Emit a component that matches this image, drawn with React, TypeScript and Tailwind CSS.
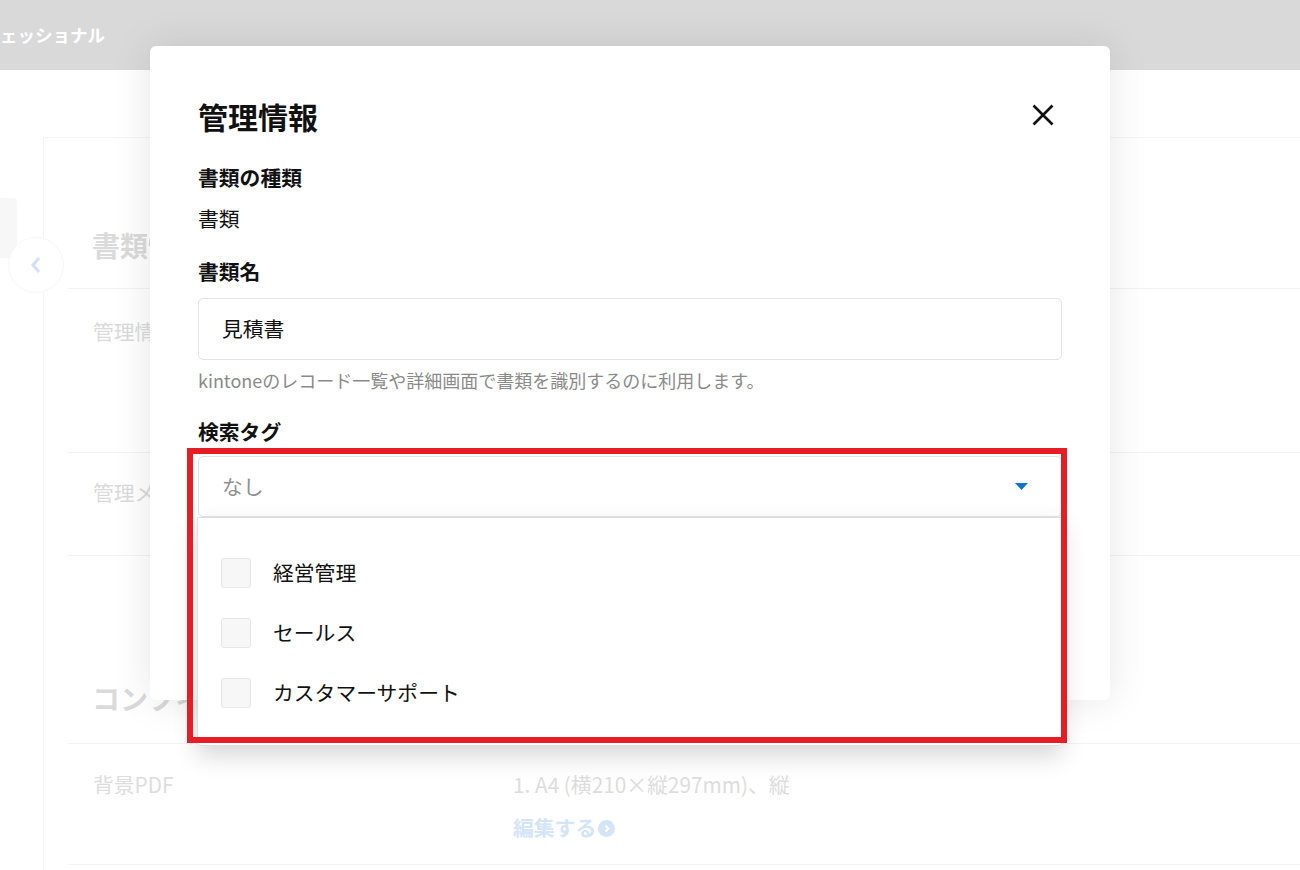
import { useState } from 'react';

const tags = ['経営管理', 'セールス', 'カスタマーサポート'];

function CloseIcon() {
  return (
    <svg width="22" height="22" viewBox="0 0 22 22" className="mr-[8px] mb-[3px]">
      <path d="M1.5 1.5 L20.5 20.5 M20.5 1.5 L1.5 20.5" stroke="#111" strokeWidth="2.6" fill="none" />
    </svg>
  );
}

function Caret() {
  return (
    <svg width="13" height="7" viewBox="0 0 13 7">
      <polygon points="0,0 13,0 6.5,7" fill="#0b76d1" />
    </svg>
  );
}

function BackgroundPage() {
  return (
    <div className="w-full">
      <div className="h-[70px] bg-[#d9d9d9] flex items-center">
        <span className="text-white font-bold text-[17.5px]">ェッショナル</span>
      </div>
      <div className="h-[67px]" />
      <div className="ml-[43px] border-l border-t border-[#f5f5f5] pl-[24px] h-[800px]">
        <div className="pt-[86px] pb-[22px] pl-[24px] border-b border-[#f2f2f2]">
          <h2 className="text-[28px] leading-[42px] font-bold text-[#dadada]">書類情報</h2>
        </div>
        <div className="h-[164px] pt-[27px] pl-[25px] border-b border-[#f2f2f2]">
          <p className="text-[20.8px] leading-[30px] text-[#dadada]">管理情報</p>
        </div>
        <div className="h-[103px] pt-[24px] pl-[25px] border-b border-[#f2f2f2]">
          <p className="text-[20.8px] leading-[30px] text-[#dadada]">管理メモ</p>
        </div>
        <div className="pt-[121px] pb-[24px] pl-[24px] border-b border-[#f2f2f2]">
          <h2 className="text-[28px] leading-[42px] font-bold text-[#dadada]">コンフィグ</h2>
        </div>
        <div className="h-[121px] pt-[25px] pl-[25px] border-b border-[#f2f2f2] grid grid-cols-[420px_1fr]">
          <p className="text-[20.8px] leading-[30px] text-[#dddddd]">背景PDF</p>
          <div>
            <p className="text-[20.8px] leading-[30px] text-[#dddddd]">1. A4 (横210×縦297mm)、縦</p>
            <div className="mt-[13px] flex items-center gap-[2px]">
              <span className="text-[20.8px] leading-[30px] font-bold text-[#d3e5f7]">編集する</span>
              <span className="w-[17px] h-[17px] rounded-full bg-[#d3e5f7] flex items-center justify-center mt-[3px]">
                <svg width="8" height="9" viewBox="0 0 8 9">
                  <path d="M2.5 1.5 L5.5 4.5 L2.5 7.5" stroke="#fff" strokeWidth="1.8" fill="none" />
                </svg>
              </span>
            </div>
          </div>
        </div>
      </div>
      <div className="absolute left-0 top-[198px] w-[17px] h-[60px] bg-[#f7f7f7] rounded-r-[4px]" />
      <div className="absolute left-[8px] top-[237px] w-[56px] h-[56px] rounded-full border border-[#f7f7f7] bg-white flex items-center justify-center">
        <svg width="14" height="20" viewBox="0 0 14 20">
          <path d="M10 3 L4 10 L10 17" stroke="#cfe2f6" strokeWidth="3" fill="none" />
        </svg>
      </div>
    </div>
  );
}

export default function App() {
  const [checked, setChecked] = useState<string[]>([]);

  const toggle = (t: string) =>
    setChecked((prev) => (prev.includes(t) ? prev.filter((x) => x !== t) : [...prev, t]));

  return (
    <div className="relative w-[1300px] h-[870px] overflow-hidden bg-white font-['Noto_Sans_CJK_JP','Noto_Sans',sans-serif] text-[#111]">
      <BackgroundPage />

      {/* modal */}
      <div className="absolute left-[150px] top-[46px] w-[960px] h-[654px] bg-white rounded-[6px] shadow-[0_0_40px_rgba(0,0,0,0.10)] px-[48px] pt-[48px]">
        <div className="flex items-center justify-between">
          <h1 className="text-[30px] leading-[45px] font-bold">管理情報</h1>
          <CloseIcon />
        </div>

        <p className="mt-[23px] text-[20.8px] leading-[30px] font-bold">書類の種類</p>
        <p className="mt-[11px] text-[20.8px] leading-[30px]">書類</p>

        <p className="mt-[23px] text-[20.8px] leading-[30px] font-bold">書類名</p>
        <div className="mt-[12px] h-[62px] border border-[#e4e4e4] rounded-[5px] flex items-center px-[23px]">
          <span className="text-[20.8px]">見積書</span>
        </div>
        <p className="mt-[7px] text-[18px] leading-[26px] text-[#8a8a8a]">
          kintoneのレコード一覧や詳細画面で書類を識別するのに利用します。
        </p>

        <p className="mt-[23px] text-[20.8px] leading-[30px] font-bold">検索タグ</p>
        <div className="relative mt-[10px]">
          <div className="h-[61px] border border-[#e4e4e4] rounded-[5px] flex items-center justify-between pl-[23px] pr-[33px]">
            <span className="text-[20.8px] text-[#8f8f8f]">なし</span>
            <Caret />
          </div>
          <div className="absolute z-10 left-[-1px] right-0 top-full bg-white border border-[#dedede] rounded-b-[4px] shadow-[0_10px_24px_rgba(0,0,0,0.16)] pt-[25px] pb-[22px]">
            {tags.map((t) => (
              <label key={t} className="h-[60px] flex items-center pl-[23px] gap-[22px] cursor-pointer">
                <span
                  onClick={() => toggle(t)}
                  className="w-[30px] h-[30px] rounded-[3px] bg-[#f7f7f7] border border-[#e7e7e7] flex items-center justify-center"
                >
                  {checked.includes(t) && (
                    <svg width="16" height="12" viewBox="0 0 16 12">
                      <path d="M1 6 L6 11 L15 1" stroke="#0b76d1" strokeWidth="2.5" fill="none" />
                    </svg>
                  )}
                </span>
                <span className="text-[20.8px]">{t}</span>
              </label>
            ))}
          </div>
        </div>
      </div>

      {/* highlight */}
      <div className="absolute z-20 left-[187px] top-[448px] w-[880px] h-[295px] border-[6px] border-[#e51d24] pointer-events-none" />
    </div>
  );
}
